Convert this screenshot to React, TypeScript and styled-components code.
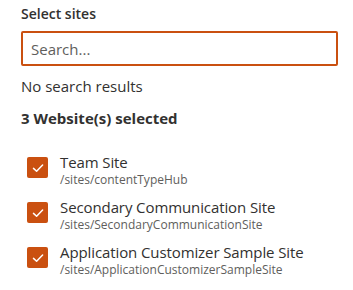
import { FC } from "react";
import styled, { createGlobalStyle } from "styled-components";

const GlobalStyle = createGlobalStyle`
  html, body {
    margin: 0;
    padding: 0;
    background: #ffffff;
  }
  body {
    font-family: "Open Sans", "Noto Sans", sans-serif;
    color: #323130;
    -webkit-font-smoothing: antialiased;
  }
`;

type Site = {
  title: string;
  url: string;
};

const sites: Site[] = [
  { title: "Team Site", url: "/sites/contentTypeHub" },
  { title: "Secondary Communication Site", url: "/sites/SecondaryCommunicationSite" },
  { title: "Application Customizer Sample Site", url: "/sites/ApplicationCustomizerSampleSite" },
];

const Panel = styled.div`
  width: 317px;
  padding: 4px 0 0 21px;
  display: flex;
  flex-direction: column;
`;

const FieldLabel = styled.label`
  font-size: 14px;
  font-weight: 600;
  line-height: 20px;
  padding: 0 0 7px;
`;

const SearchBox = styled.input`
  box-sizing: border-box;
  width: 317px;
  height: 35px;
  border: 2px solid #ca5010;
  border-radius: 2px;
  padding: 0 8px;
  font-family: inherit;
  font-size: 15px;
  color: #323130;
  outline: none;
  background: #fff;

  &::placeholder {
    color: #605e5c;
  }
`;

const StatusText = styled.div<{ $bold?: boolean }>`
  font-size: 15px;
  line-height: 20px;
  font-weight: ${(p) => (p.$bold ? 700 : 400)};
  margin-top: ${(p) => (p.$bold ? "12px" : "10px")};
`;

const SiteList = styled.div`
  display: flex;
  flex-direction: column;
  gap: 5px;
  margin-top: 24px;
  padding-left: 6px;
`;

const SiteRow = styled.div`
  display: flex;
  align-items: flex-start;
  gap: 12px;
  height: 40px;
`;

const CheckBox = styled.span`
  flex: 0 0 auto;
  width: 21px;
  height: 21px;
  margin-top: 5px;
  border-radius: 2px;
  background: #ca5010;
  display: flex;
  align-items: center;
  justify-content: center;
`;

const SiteText = styled.div`
  display: flex;
  flex-direction: column;
`;

const SiteTitle = styled.span`
  font-size: 15px;
  line-height: 20px;
  color: #323130;
  letter-spacing: -0.1px;
`;

const SiteUrl = styled.span`
  font-size: 12px;
  line-height: 15px;
  color: #605e5c;
`;

const CheckMark: FC = () => (
  <svg width="14" height="14" viewBox="0 0 14 14" fill="none">
    <path
      d="M2.5 7.4 L5.6 10.2 L11.6 4"
      stroke="#ffffff"
      strokeWidth="1.5"
      strokeLinecap="round"
      strokeLinejoin="round"
    />
  </svg>
);

const App: FC = () => (
  <>
    <GlobalStyle />
    <Panel>
      <FieldLabel>Select sites</FieldLabel>
      <SearchBox placeholder="Search..." />
      <StatusText>No search results</StatusText>
      <StatusText $bold>{sites.length} Website(s) selected</StatusText>
      <SiteList>
        {sites.map((site) => (
          <SiteRow key={site.url}>
            <CheckBox>
              <CheckMark />
            </CheckBox>
            <SiteText>
              <SiteTitle>{site.title}</SiteTitle>
              <SiteUrl>{site.url}</SiteUrl>
            </SiteText>
          </SiteRow>
        ))}
      </SiteList>
    </Panel>
  </>
);

export default App;
